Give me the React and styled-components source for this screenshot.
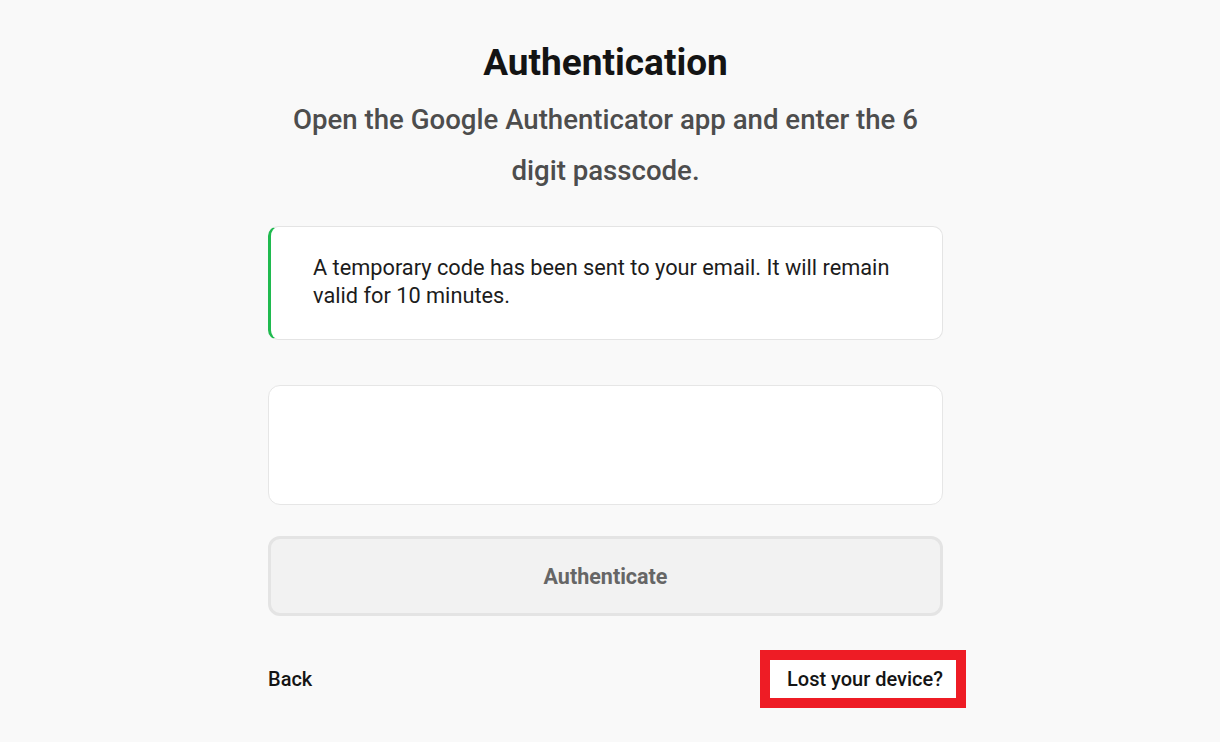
import React, { useState } from 'react';
import styled, { createGlobalStyle } from 'styled-components';

const GlobalStyle = createGlobalStyle`
  html, body {
    margin: 0;
    padding: 0;
    background: #f9f9f9;
    font-family: Roboto, 'Liberation Sans', sans-serif;
  }
  * {
    box-sizing: border-box;
  }
`;

const PAGE = styled.div`
  display: flex;
  justify-content: center;
  padding: 41px 9px 0 0;
  min-height: 742px;
`;

const WRAPPER = styled.div`
  display: flex;
  flex-direction: column;
  width: 675px;
`;

const TITLE = styled.h1`
  margin: 0;
  font-size: 37px;
  line-height: 43px;
  font-weight: 700;
  color: #141414;
  text-align: center;
`;

const SUBTITLE = styled.p`
  margin: 10px 0 0;
  padding: 0 16px;
  font-size: 27.6px;
  line-height: 51px;
  font-weight: 500;
  color: #4d4d4d;
  text-align: center;
`;

const ALERT = styled.div`
  margin-top: 30px;
  background: #ffffff;
  border: 1px solid #e4e4e4;
  border-left: 3px solid #1fba4f;
  border-radius: 10px;
  padding: 27px 40px 29px 42px;
  font-size: 21.75px;
  line-height: 28px;
  color: #1c1c1c;
`;

const INPUT = styled.input`
  margin-top: 45px;
  height: 120px;
  background: #ffffff;
  border: 1px solid #e6e6e6;
  border-radius: 12px;
  font-family: inherit;
  font-size: 32px;
  text-align: center;
  outline: none;
`;

const BUTTON = styled.button`
  margin-top: 31px;
  height: 80px;
  background: #f2f2f2;
  border: 3px solid #e4e4e4;
  border-radius: 12px;
  font-family: inherit;
  font-size: 21.5px;
  font-weight: 700;
  color: #666666;
  cursor: not-allowed;
`;

const FOOTER = styled.div`
  margin-top: 44px;
  display: flex;
  justify-content: space-between;
  align-items: center;
`;

const LINK = styled.a`
  font-size: 20px;
  font-weight: 500;
  color: #141414;
  text-decoration: none;
  cursor: pointer;
`;

const HIGHLIGHT = styled(LINK)`
  background: #ffffff;
  padding: 7px 13px 7px 17px;
  margin-right: -13px;
  outline: 10px solid #ee1c25;
`;

const App = () => {
  const [code, setCode] = useState('');

  return (
    <PAGE>
      <GlobalStyle />
      <WRAPPER>
        <TITLE>Authentication</TITLE>
        <SUBTITLE>
          Open the Google Authenticator app and enter the 6 digit passcode.
        </SUBTITLE>
        <ALERT>
          A temporary code has been sent to your email. It will remain valid
          for 10 minutes.
        </ALERT>
        <INPUT
          type='text'
          inputMode='numeric'
          value={code}
          onChange={(e) => setCode(e.target.value)}
        />
        <BUTTON type='button' disabled={code.length < 6}>
          Authenticate
        </BUTTON>
        <FOOTER>
          <LINK>Back</LINK>
          <HIGHLIGHT>Lost your device?</HIGHLIGHT>
        </FOOTER>
      </WRAPPER>
    </PAGE>
  );
};

export default App;
